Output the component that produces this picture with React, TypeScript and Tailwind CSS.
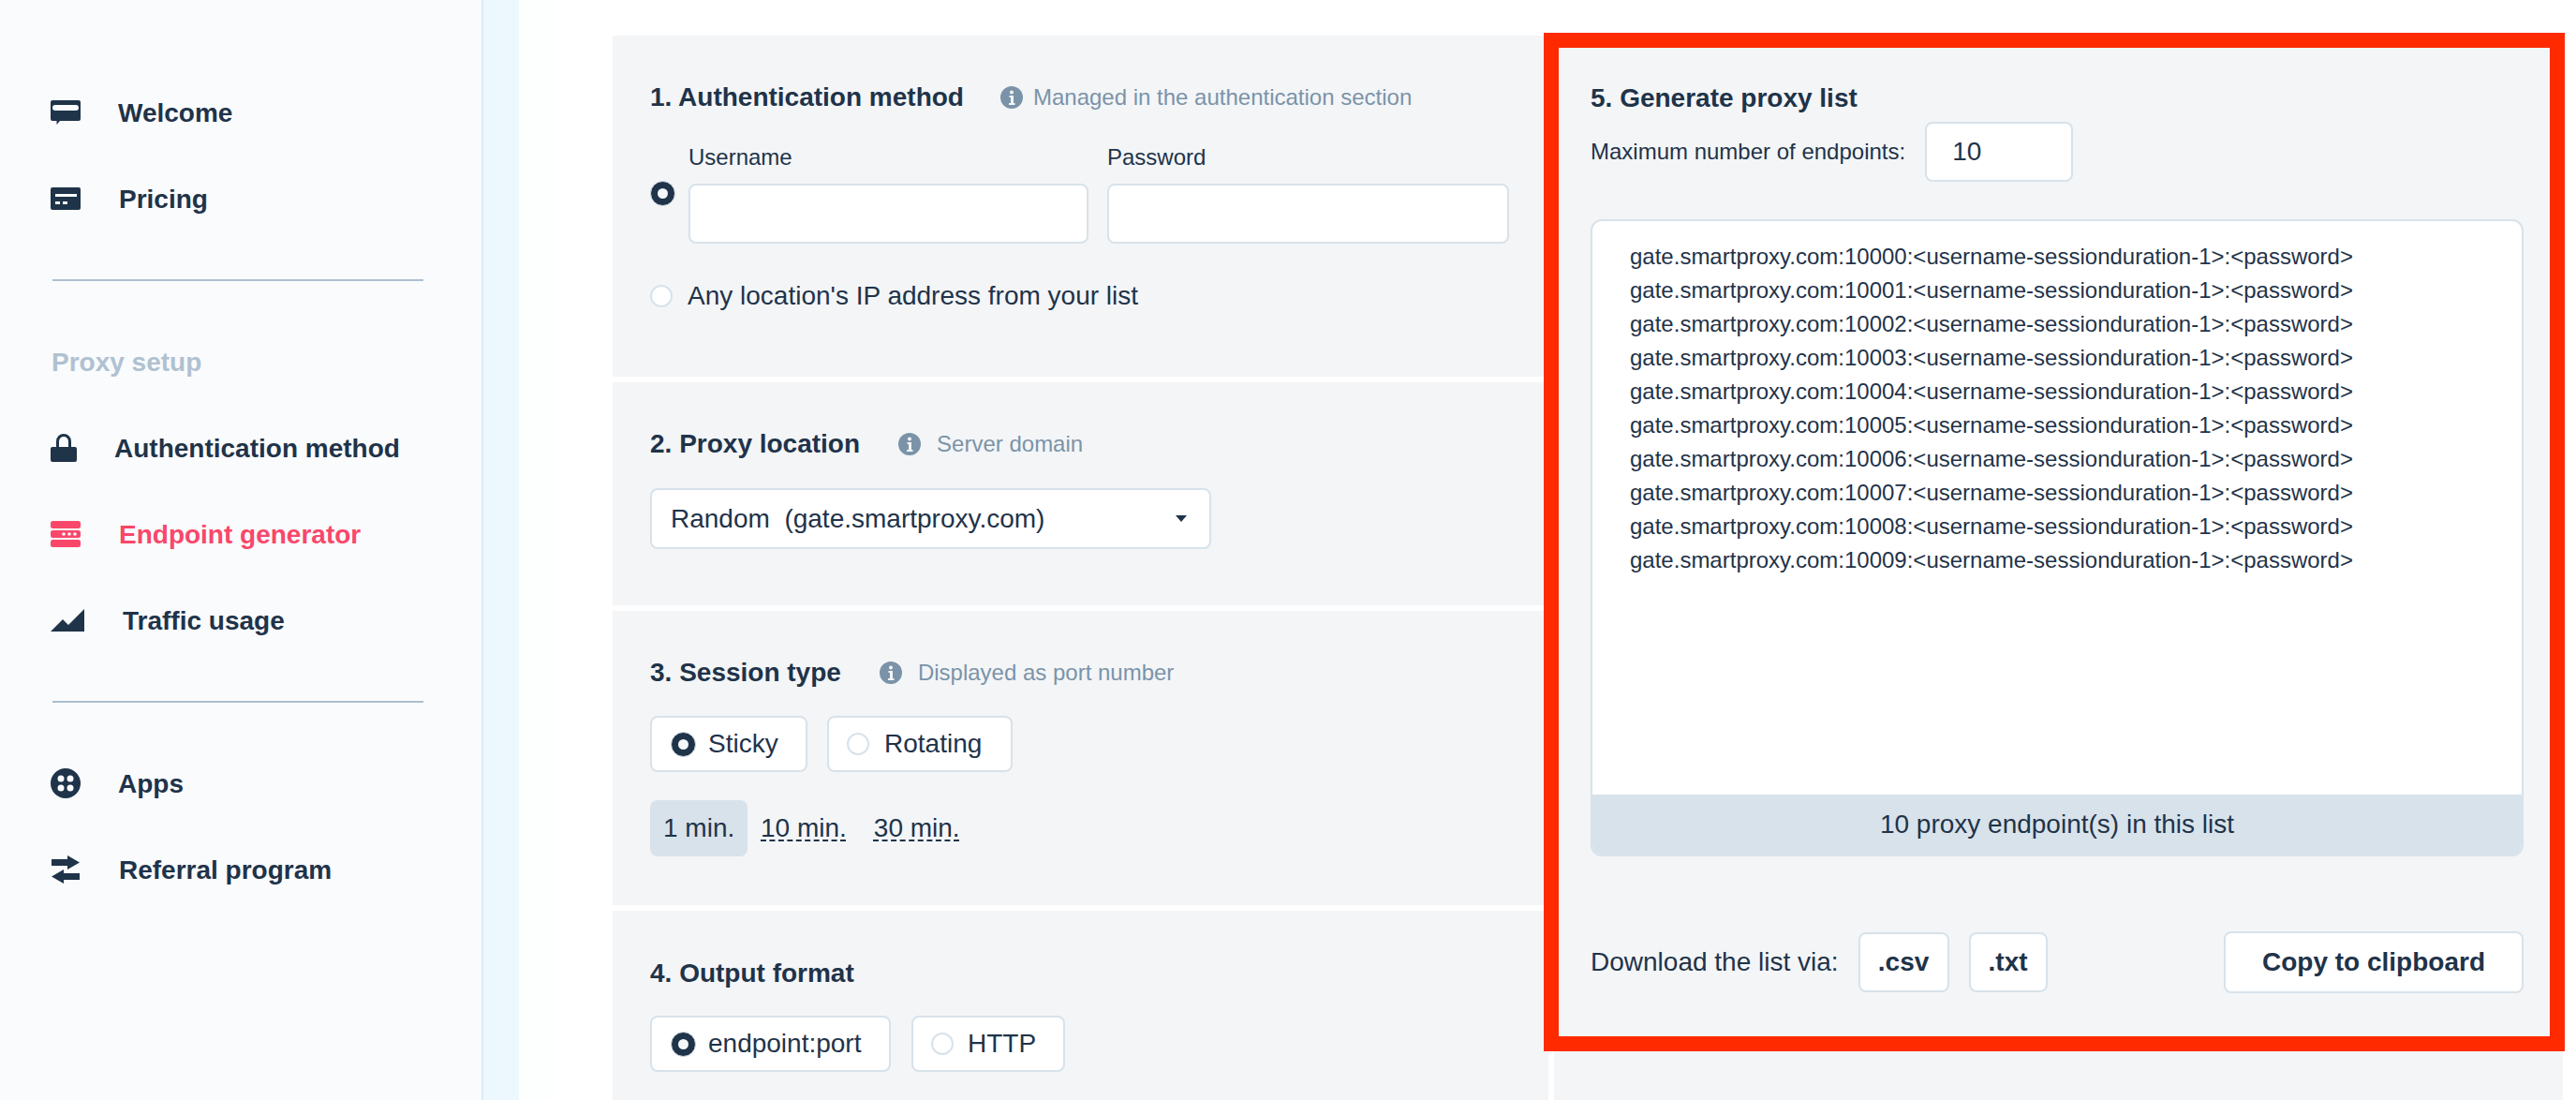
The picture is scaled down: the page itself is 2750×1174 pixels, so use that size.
import type { ReactNode } from "react";

const endpoints = Array.from({ length: 10 }, (_, i) => `gate.smartproxy.com:1000${i}:<username-sessionduration-1>:<password>`);

function WelcomeIcon() {
  return (
    <svg width="32" height="26" viewBox="0 0 32 26" className="shrink-0">
      <path fillRule="evenodd" fill="currentColor" d="M2 0h28a2 2 0 0 1 2 2v18a2 2 0 0 1-2 2H10l-3.500 4v-4H2a2 2 0 0 1-2-2V2a2 2 0 0 1 2-2Zm3 5a1.500 1.500 0 0 0 0 6h22a1.500 1.500 0 0 0 0-6Z" />
    </svg>
  );
}

function PricingIcon() {
  return (
    <svg width="32" height="24" viewBox="0 0 32 24" className="shrink-0">
      <path fillRule="evenodd" fill="currentColor" d="M2 0h28a2 2 0 0 1 2 2v20a2 2 0 0 1-2 2H2a2 2 0 0 1-2-2V2a2 2 0 0 1 2-2Zm3 7v3h23V7Zm0 8v3h5v-3Zm8 0v3h5v-3Z" />
    </svg>
  );
}

function LockIcon() {
  return (
    <svg width="28" height="30" viewBox="0 0 28 30" className="shrink-0">
      <path fillRule="evenodd" fill="currentColor" d="M2 14h4V8a8 8 0 0 1 16 0v6h4a2 2 0 0 1 2 2v12a2 2 0 0 1-2 2H2a2 2 0 0 1-2-2V16a2 2 0 0 1 2-2Zm7 0h10V8a5 5 0 0 0-10 0Z" />
    </svg>
  );
}

function ServerIcon() {
  return (
    <svg width="32" height="28" viewBox="0 0 32 28" className="shrink-0">
      <rect width="32" height="8" rx="2.500" fill="currentColor" />
      <path fillRule="evenodd" fill="currentColor" d="M2.500 10h27a2.500 2.500 0 0 1 2.500 2.500v3a2.500 2.500 0 0 1-2.500 2.500h-27A2.500 2.500 0 0 1 0 15.500v-3A2.500 2.500 0 0 1 2.500 10Zm11.500 2.200a1.800 1.800 0 1 0 0 3.600 1.800 1.800 0 0 0 0-3.600Zm6 0a1.800 1.800 0 1 0 0 3.600 1.800 1.800 0 0 0 0-3.600Zm6 0a1.800 1.800 0 1 0 0 3.600 1.800 1.800 0 0 0 0-3.600Z" />
      <rect y="20" width="32" height="8" rx="2.500" fill="currentColor" />
    </svg>
  );
}

function TrafficIcon() {
  return (
    <svg width="36" height="24" viewBox="0 0 36 24" className="shrink-0">
      <path fill="currentColor" d="M0 24 13 11l6 6L36 0v24Z" />
    </svg>
  );
}

function AppsIcon() {
  return (
    <svg width="32" height="32" viewBox="0 0 32 32" className="shrink-0">
      <circle cx="16" cy="16" r="16" fill="currentColor" />
      <circle cx="11" cy="11" r="3.500" fill="#f9fbfd" />
      <circle cx="21" cy="11" r="3.500" fill="#f9fbfd" />
      <circle cx="11" cy="21" r="3.500" fill="#f9fbfd" />
      <circle cx="21" cy="21" r="3.500" fill="#f9fbfd" />
    </svg>
  );
}

function ReferralIcon() {
  return (
    <svg width="32" height="30" viewBox="0 0 32 30" className="shrink-0">
      <path fill="currentColor" d="M1 4h17V0l13 7.500L18 15v-4H1ZM31 19H14v-4L1 22.500 14 30v-4h17Z" />
    </svg>
  );
}

function InfoIcon() {
  return (
    <svg width="24" height="24" viewBox="0 0 24 24" className="shrink-0">
      <circle cx="12" cy="12" r="12" fill="#7b93a8" />
      <circle cx="12" cy="6.500" r="2" fill="#f3f5f7" />
      <path fill="#f3f5f7" d="M9.500 10H14v8h1.500v2h-6.500v-2h2v-6H9.500Z" />
    </svg>
  );
}

function Radio({ checked = false }: { checked?: boolean }) {
  if (checked) {
    return (
      <span className="block size-[27px] shrink-0 rounded-full border-[1px] border-[#d8e2ea] bg-[#1f3349] p-[7px]">
        <span className="block size-full rounded-full bg-[#f5f7fa]" />
      </span>
    );
  }
  return <span className="block size-[24px] shrink-0 rounded-full border-[2px] border-[#d8e2ea] bg-white" />;
}

function NavItem({ icon, label, textClass, active = false }: { icon: ReactNode; label: string; textClass: string; active?: boolean }) {
  return (
    <div className={`flex h-[92px] items-center pl-[54px] text-[28px] font-bold ${active ? "text-[#f9476a]" : "text-[#1f3349]"}`}>
      <span className="flex w-[36px] shrink-0 items-center">{icon}</span>
      <span className={`mt-[2px] ${textClass}`}>{label}</span>
    </div>
  );
}

function SectionTitle({ title, hint, gap }: { title: string; hint?: string; gap?: string }) {
  return (
    <div className="flex h-[32px] items-center">
      <h2 className="text-[28px] font-bold text-[#1f3349]">{title}</h2>
      {hint && (
        <div className={`flex items-center text-[24px] text-[#7b93a8] ${gap}`}>
          <InfoIcon />
          <span>{hint}</span>
        </div>
      )}
    </div>
  );
}

function OptionButton({ label, checked = false, widthClass, gapClass }: { label: string; checked?: boolean; widthClass: string; gapClass: string }) {
  return (
    <div className={`flex h-[60px] items-center rounded-lg border-2 border-[#d8e2ea] bg-white ${checked ? "pl-[20px]" : "pl-[19px]"} ${widthClass}`}>
      <Radio checked={checked} />
      <span className={gapClass}>{label}</span>
    </div>
  );
}

export default function App() {
  return (
    <div className="flex h-screen overflow-hidden bg-white text-[28px] text-[#1f3349] [font-family:'Liberation_Sans',Arial,sans-serif]">
      <aside className="w-[514px] shrink-0 bg-[#f9fbfd] pt-[74px]">
        <NavItem icon={<WelcomeIcon />} label="Welcome" textClass="ml-[36px]" />
        <NavItem icon={<PricingIcon />} label="Pricing" textClass="ml-[37px]" />
        <div className="ml-[56px] mt-[40px] h-[2px] w-[396px] bg-[#adbfce]" />
        <div className="ml-[55px] mt-[65px] flex h-[44px] items-center text-[28px] font-bold text-[#b0c1d0]">Proxy setup</div>
        <div className="mt-[23px]">
          <NavItem icon={<LockIcon />} label="Authentication method" textClass="ml-[32px]" />
          <NavItem icon={<ServerIcon />} label="Endpoint generator" textClass="ml-[37px]" active />
          <NavItem icon={<TrafficIcon />} label="Traffic usage" textClass="ml-[41px]" />
        </div>
        <div className="ml-[56px] mt-[40px] h-[2px] w-[396px] bg-[#adbfce]" />
        <div className="mt-[40px]">
          <NavItem icon={<AppsIcon />} label="Apps" textClass="ml-[36px]" />
          <NavItem icon={<ReferralIcon />} label="Referral program" textClass="ml-[37px]" />
        </div>
      </aside>
      <div className="w-[40px] shrink-0 border-l-2 border-[#dcebf1] bg-[#ecf8fd]" />
      <div className="w-[40px] shrink-0 bg-[#fdfefe]" />

      <main className="flex min-w-0 flex-1 gap-[5px] pl-[60px] pt-[38px]">
        <div className="flex w-[999px] shrink-0 flex-col gap-[6px]">
          <section className="h-[364px] bg-[#f3f5f7] pl-[40px] pt-[50px]">
            <SectionTitle title="1. Authentication method" hint="Managed in the authentication section" gap="ml-[39px] gap-[11px]" />
            <div className="mt-[34px] flex items-start">
              <div className="mt-[39px] w-[41px] shrink-0">
                <Radio checked />
              </div>
              <label className="w-[427px]">
                <span className="block h-[28px] text-[24px] leading-[28px]">Username</span>
                <span className="mt-[14px] block h-[64px] rounded-lg border-2 border-[#d8e2ea] bg-white" />
              </label>
              <label className="ml-[20px] w-[429px]">
                <span className="block h-[28px] text-[24px] leading-[28px]">Password</span>
                <span className="mt-[14px] block h-[64px] rounded-lg border-2 border-[#d8e2ea] bg-white" />
              </label>
            </div>
            <div className="mt-[42px] flex h-[28px] items-center">
              <Radio />
              <span className="ml-[16px]">Any location's IP address from your list</span>
            </div>
          </section>

          <section className="h-[238px] bg-[#f3f5f7] pl-[40px] pt-[50px]">
            <SectionTitle title="2. Proxy location" hint="Server domain" gap="ml-[41px] gap-[17px]" />
            <div className="mt-[31px] flex h-[65px] w-[599px] items-center justify-between rounded-lg border-2 border-[#d8e2ea] bg-white pl-[20px] pr-[24px]">
              <span className="whitespace-pre">Random  (gate.smartproxy.com)</span>
              <span className="h-0 w-0 border-x-[6px] border-t-[7px] border-x-transparent border-t-[#1f3349]" />
            </div>
          </section>

          <section className="h-[314px] bg-[#f3f5f7] pl-[40px] pt-[50px]">
            <SectionTitle title="3. Session type" hint="Displayed as port number" gap="ml-[41px] gap-[17px]" />
            <div className="mt-[30px] flex gap-[21px]">
              <OptionButton label="Sticky" checked widthClass="w-[168px]" gapClass="ml-[13px]" />
              <OptionButton label="Rotating" widthClass="w-[198px]" gapClass="ml-[16px]" />
            </div>
            <div className="mt-[30px] flex h-[60px] items-center">
              <span className="flex h-full w-[104px] items-center rounded-lg bg-[#d8e2ea] pl-[14px]">1 min.</span>
              <span className="ml-[14px] underline decoration-dashed decoration-2 underline-offset-[3px]">10 min.</span>
              <span className="ml-[29px] underline decoration-dashed decoration-2 underline-offset-[3px]">30 min.</span>
            </div>
          </section>

          <section className="flex-1 bg-[#f3f5f7] pl-[40px] pt-[51px]">
            <SectionTitle title="4. Output format" />
            <div className="mt-[29px] flex gap-[22px]">
              <OptionButton label="endpoint:port" checked widthClass="w-[257px]" gapClass="ml-[13px]" />
              <OptionButton label="HTTP" widthClass="w-[164px]" gapClass="ml-[15px]" />
            </div>
          </section>
        </div>

        <section className="relative ml-[1px] w-[1077px] shrink-0 bg-[#f3f5f7] pl-[39px] pr-[42px] pt-[51px]">
          <SectionTitle title="5. Generate proxy list" />
          <div className="mt-[9px] flex items-center">
            <span className="text-[24px]">Maximum number of endpoints:</span>
            <div className="ml-[21px] flex h-[64px] w-[158px] items-center rounded-lg border-2 border-[#d8e2ea] bg-white pl-[27px]">10</div>
          </div>
          <div className="mt-[40px] flex h-[680px] flex-col overflow-hidden rounded-xl border-2 border-[#d8e2ea] bg-white">
            <div className="flex-1 pl-[40px] pt-[20px] text-[24px] leading-[36px]">
              {endpoints.map((endpoint) => (
                <div key={endpoint}>{endpoint}</div>
              ))}
            </div>
            <div className="flex h-[64px] items-center justify-center bg-[#d8e2ea]">10 proxy endpoint(s) in this list</div>
          </div>
          <div className="mt-[80px] flex items-center">
            <span>Download the list via:</span>
            <button className="ml-[21px] h-[64px] w-[97px] rounded-lg border-2 border-[#d8e2ea] bg-white font-bold">.csv</button>
            <button className="ml-[21px] h-[64px] w-[84px] rounded-lg border-2 border-[#d8e2ea] bg-white font-bold">.txt</button>
            <button className="ml-auto h-[66px] w-[320px] rounded-lg border-2 border-[#d8e2ea] bg-white font-bold">Copy to clipboard</button>
          </div>
          {/* highlight frame drawn over the panel */}
          <div className="pointer-events-none absolute left-[-11px] top-[-3px] h-[1087px] w-[1090px] border-[16px] border-[#ff2a00]" />
        </section>
      </main>
    </div>
  );
}
